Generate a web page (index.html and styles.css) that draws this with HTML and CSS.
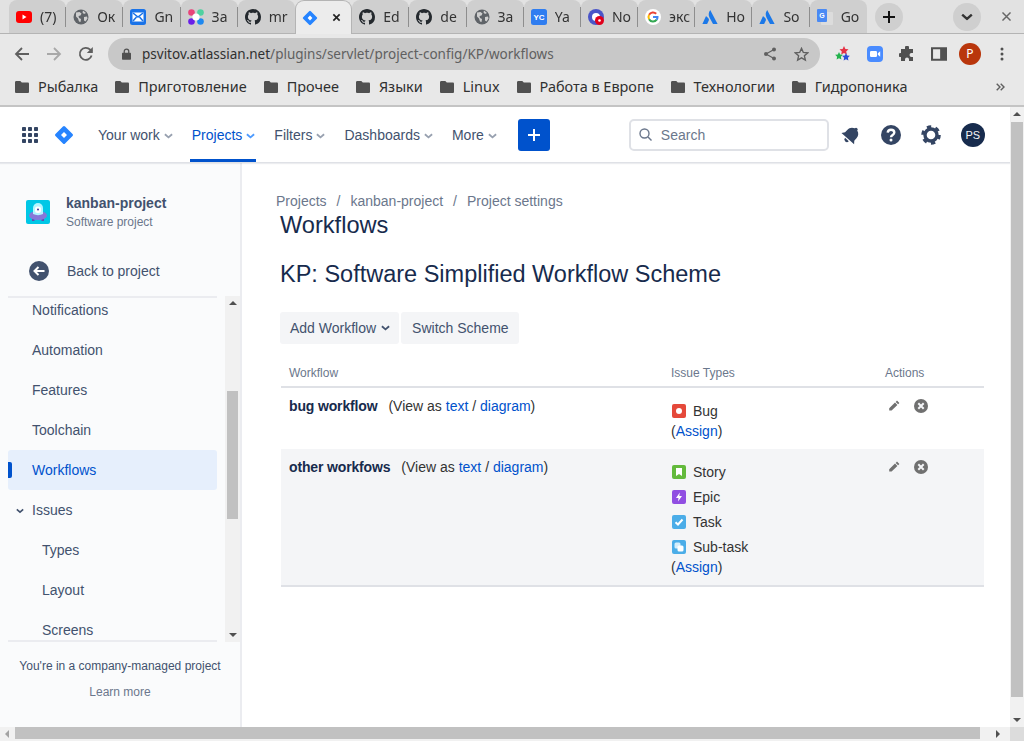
FILE: index.html
```html
<!DOCTYPE html>
<html lang="ru">
  <head>
    <meta charset="UTF-8" />
    <title>Workflows - Jira</title>
    <link rel="stylesheet" href="styles.css">
  </head>
  <body>
    <svg class="sprites" xmlns="http://www.w3.org/2000/svg">
      <symbol id="i-github" viewBox="0 0 16 16"><path fill="#24292e" d="M8 0C3.58 0 0 3.58 0 8c0 3.54 2.29 6.53 5.47 7.59.4.07.55-.17.55-.38 0-.19-.01-.82-.01-1.49-2.01.37-2.53-.49-2.69-.94-.09-.23-.48-.94-.82-1.13-.28-.15-.68-.52-.01-.53.63-.01 1.08.58 1.23.82.72 1.21 1.87.87 2.33.66.07-.52.28-.87.51-1.07-1.78-.2-3.64-.89-3.64-3.95 0-.87.31-1.59.82-2.15-.08-.2-.36-1.02.08-2.12 0 0 .67-.21 2.2.82.64-.18 1.32-.27 2-.27.68 0 1.36.09 2 .27 1.53-1.04 2.2-.82 2.2-.82.44 1.1.16 1.92.08 2.12.51.56.82 1.27.82 2.15 0 3.07-1.87 3.75-3.65 3.95.29.25.54.73.54 1.48 0 1.07-.01 1.93-.01 2.2 0 .21.15.46.55.38A8.013 8.013 0 0016 8c0-4.42-3.58-8-8-8z"/></symbol>
      <symbol id="i-globe" viewBox="0 0 16 16"><circle cx="8" cy="8" r="7.500" fill="#5f6368"/><path fill="#cfcfcf" d="M3 3.500l3.500-.5 2 1.500-1 2-2 .5.5 2 2 1-.5 3-1.500-.5-1-3-2-2zM10 1.500l3 2.500-2 1-1.500-1.500zM11 8l3-.500.500 2-2 3-1.500-1z"/></symbol>
      <symbol id="i-atlassian" viewBox="0 0 16 16"><path fill="#1b78e8" d="M8.200 1c-1.900 3-1.800 5.200-.7 7.400L11 15h4.600zM4.500 7.400c-.2-.3-.5-.3-.7.100L.4 15h4.700l1.700-3.400c.5-1 0-2.600-2.300-4.200z"/></symbol>
      <symbol id="i-folder" viewBox="0 0 14 12"><path fill="#505050" d="M1.300 0h4l1.500 1.500h6c.7 0 1.200.5 1.200 1.200v8c0 .7-.5 1.300-1.200 1.300H1.300C.6 12 0 11.400 0 10.700V1.300C0 .6.600 0 1.300 0z"/></symbol>
      <symbol id="i-chevron" viewBox="0 0 10 6"><path fill="none" stroke="currentColor" stroke-width="2" d="M1 1l4 3.500L9 1"/></symbol>
      <symbol id="i-jira" viewBox="0 0 20 20"><rect x="3.200" y="3.200" width="13.600" height="13.600" rx="1.500" transform="rotate(45 10 10)" fill="#2684ff"/><rect x="7.900" y="7.900" width="4.200" height="4.200" transform="rotate(45 10 10)" fill="#fff"/></symbol>
      <symbol id="i-pencil" viewBox="0 0 12 12"><path fill="#707070" d="M9 .6l2.400 2.300-1.300 1.300-2.400-2.300zM7 2.600l2.400 2.300-5.800 5.700H1.200V8.300z"/></symbol>
      <symbol id="i-remove" viewBox="0 0 14 14"><circle cx="7" cy="7" r="7" fill="#707070"/><path stroke="#f4f5f7" stroke-width="2" d="M4.300 4.300l5.400 5.400M9.700 4.300L4.300 9.700"/></symbol>
    </svg>

    <div class="tabstrip">
      <div class="tab"><svg class="fav" viewBox="0 0 16 16"><rect y="2" width="16" height="12" rx="3" fill="#f00"/><path fill="#fff" d="M6.500 5.500v5l4-2.500z"/></svg><span class="tab-title">(7)</span></div>
      <div class="tab"><svg class="fav"><use href="#i-globe"/></svg><span class="tab-title">Ок</span></div>
      <div class="tab"><svg class="fav" viewBox="0 0 16 16"><rect width="16" height="16" rx="2.500" fill="#1a73e8"/><rect x="2.500" y="3.500" width="11" height="9" fill="#fff"/><path fill="none" stroke="#1a73e8" stroke-width="1.500" d="M3 4l5 4 5-4M3 12l3.500-4M13 12L9.500 8"/></svg><span class="tab-title">Gn</span></div>
      <div class="tab"><svg class="fav" viewBox="0 0 16 16"><circle cx="3.500" cy="3.500" r="3.300" fill="#e8447a"/><circle cx="12.500" cy="3.500" r="3.300" fill="#4fd1a0"/><circle cx="3.500" cy="12.500" r="3.300" fill="#6a1fe8"/><circle cx="12.500" cy="12.500" r="3.300" fill="#1e88f0"/><circle cx="8" cy="8" r="3.600" fill="#fff"/></svg><span class="tab-title">За</span></div>
      <div class="tab tab-before-active"><svg class="fav"><use href="#i-github"/></svg><span class="tab-title">mr</span></div>
      <div class="tab tab-active"><svg class="fav"><use href="#i-jira"/></svg><svg class="tab-close" viewBox="0 0 10 10"><path stroke="#222" stroke-width="1.800" d="M1.500 1.500l7 7M8.500 1.500l-7 7"/></svg></div>
      <div class="tab"><svg class="fav"><use href="#i-github"/></svg><span class="tab-title">Ed</span></div>
      <div class="tab"><svg class="fav"><use href="#i-github"/></svg><span class="tab-title">de</span></div>
      <div class="tab"><svg class="fav"><use href="#i-globe"/></svg><span class="tab-title">За</span></div>
      <div class="tab"><svg class="fav" viewBox="0 0 16 16"><rect width="16" height="16" rx="2.500" fill="#2f7df0"/><text x="8" y="11" font-size="8" font-weight="700" font-family="Liberation Sans" text-anchor="middle" fill="#fff">YC</text></svg><span class="tab-title">Ya</span></div>
      <div class="tab"><svg class="fav" viewBox="0 0 16 16"><circle cx="8" cy="8" r="8" fill="#4a55c8"/><circle cx="8" cy="8" r="4" fill="#fff"/><circle cx="11.500" cy="11.500" r="4.500" fill="#e0001b"/><circle cx="11.500" cy="11.500" r="1.300" fill="#fff"/></svg><span class="tab-title">No</span></div>
      <div class="tab"><svg class="fav" viewBox="0 0 16 16"><circle cx="8" cy="8" r="8" fill="#fff"/><path fill="none" stroke="#ea4335" stroke-width="2" d="M11.200 4.800A4.500 4.500 0 0 0 4.100 5.800"/><path fill="none" stroke="#fbbc05" stroke-width="2" d="M4.100 5.800a4.500 4.500 0 0 0 0 4.400"/><path fill="none" stroke="#34a853" stroke-width="2" d="M4.100 10.200a4.500 4.500 0 0 0 7.600.5"/><path fill="none" stroke="#4285f4" stroke-width="2" d="M11.700 10.700A4.500 4.500 0 0 0 12.500 8H8"/></svg><span class="tab-title">экс</span></div>
      <div class="tab"><svg class="fav"><use href="#i-atlassian"/></svg><span class="tab-title">Ho</span></div>
      <div class="tab"><svg class="fav"><use href="#i-atlassian"/></svg><span class="tab-title">So</span></div>
      <div class="tab tab-last"><svg class="fav" viewBox="0 0 16 16"><rect x="4" y="3" width="12" height="13" rx="1" fill="#dcdcdc"/><rect width="10" height="13" rx="1" fill="#4a8af4"/><text x="5" y="9" font-size="7" font-weight="700" font-family="Liberation Sans" text-anchor="middle" fill="#fff">G</text></svg><span class="tab-title">Go</span></div>
      <div class="round-btn new-tab"><svg width="14" height="14" viewBox="0 0 14 14"><path stroke="#111" stroke-width="2" d="M7 1v12M1 7h12"/></svg></div>
      <div class="round-btn tab-search"><svg width="12" height="8" viewBox="0 0 10 6"><use href="#i-chevron" color="#333"/></svg></div>
      <svg class="win-close" viewBox="0 0 10 10"><path stroke="#666" stroke-width="1.600" d="M.5.500l9 9M9.500.500l-9 9"/></svg>
    </div>

    <div class="toolbar">
      <svg class="tool-icon" viewBox="0 0 16 16"><path fill="none" stroke="#5f5f5f" stroke-width="1.800" d="M15 8H2M8 2L2 8l6 6"/></svg>
      <svg class="tool-icon" viewBox="0 0 16 16"><path fill="none" stroke="#a8a8a8" stroke-width="1.800" d="M1 8h13M8 2l6 6-6 6"/></svg>
      <svg class="tool-icon" viewBox="0 0 16 16"><path fill="none" stroke="#5f5f5f" stroke-width="1.800" d="M13.600 9.500A6 6 0 1 1 12.200 3.700L14 5.500"/><path fill="#5f5f5f" d="M14.800 1v6h-6z"/></svg>
      <div class="omnibox">
        <svg class="lock" viewBox="0 0 10 13"><path fill="#505050" d="M1 5h8c.5 0 1 .5 1 1v6c0 .5-.5 1-1 1H1c-.5 0-1-.5-1-1V6c0-.5.5-1 1-1z"/><path fill="none" stroke="#505050" stroke-width="1.400" d="M2.500 5.500V3.500a2.500 2.500 0 0 1 5 0v2"/></svg>
        <span class="url"><span class="url-host">psvitov.atlassian.net</span>/plugins/servlet/project-config/KP/workflows</span>
        <svg class="omni-share" viewBox="0 0 14 14"><circle cx="11" cy="2.500" r="2" fill="#606060"/><circle cx="3" cy="7" r="2" fill="#606060"/><circle cx="11" cy="11.500" r="2" fill="#606060"/><path fill="none" stroke="#606060" stroke-width="1.200" d="M11 2.500L3 7l8 4.500"/></svg>
        <svg class="omni-star" viewBox="0 0 14 14"><path fill="none" stroke="#606060" stroke-width="1.300" d="M7 1.300l1.700 3.800 4.100.4-3.100 2.700.9 4-3.600-2.100-3.600 2.100.9-4-3.100-2.700 4.100-.4z"/></svg>
      </div>
      <div class="ext-group">
        <svg class="ext" viewBox="0 0 16 16"><path fill="#e53245" d="M9 0l1.400 2.900 3.100.4-2.300 2.200.6 3.100L9 7.100 6.200 8.600l.6-3.100-2.300-2.200 3.100-.4z"/><path fill="#22b24c" d="M4 6l1.200 2.400 2.700.4-2 1.900.5 2.700L4 12.200l-2.400 1.200.5-2.700-2-1.900 2.700-.4z"/><path fill="#2a4fd8" d="M11 7l1.200 2.400 2.700.4-2 1.900.5 2.700-2.400-1.200-2.400 1.200.5-2.700-2-1.900 2.700-.4z"/></svg>
        <svg class="ext" viewBox="0 0 16 16"><rect width="16" height="16" rx="4" fill="#4a8cff"/><rect x="3" y="5" width="7" height="6" rx="1.200" fill="#fff"/><path fill="#fff" d="M10.800 7.200L13.200 5.300v5.400l-2.400-1.900z"/></svg>
        <svg class="ext" viewBox="0 0 16 16"><path fill="#505050" d="M6 1.500a2 2 0 0 1 4 0V3h4v4h-1.500a2 2 0 0 0 0 4H14v4h-4v-1.500a2 2 0 0 0-4 0V15H2v-4h-.5a2 2 0 0 1 0-4H2V3h4z"/></svg>
        <svg class="ext" viewBox="0 0 14 12"><path fill="#505050" fill-rule="evenodd" d="M0 0h14v12H0zM1.800 1.800v8.400H8V1.800z"/></svg>
        <div class="profile">P</div>
        <svg class="ext kebab" viewBox="0 0 4 14"><circle cx="2" cy="2" r="1.500" fill="#505050"/><circle cx="2" cy="7" r="1.500" fill="#505050"/><circle cx="2" cy="12" r="1.500" fill="#505050"/></svg>
      </div>
    </div>

    <div class="bookmarks">
      <a class="mark"><svg><use href="#i-folder"/></svg>Рыбалка</a>
      <a class="mark"><svg><use href="#i-folder"/></svg>Приготовление</a>
      <a class="mark"><svg><use href="#i-folder"/></svg>Прочее</a>
      <a class="mark"><svg><use href="#i-folder"/></svg>Языки</a>
      <a class="mark"><svg><use href="#i-folder"/></svg>Linux</a>
      <a class="mark"><svg><use href="#i-folder"/></svg>Работа в Европе</a>
      <a class="mark"><svg><use href="#i-folder"/></svg>Технологии</a>
      <a class="mark"><svg><use href="#i-folder"/></svg>Гидропоника</a>
      <svg class="more-marks" viewBox="0 0 9 8"><path fill="none" stroke="#606060" stroke-width="1.400" d="M.7.700L4 4 .7 7.300M4.700.700L8 4 4.700 7.300"/></svg>
    </div>

    <div class="viewport">
      <div class="page">
        <header class="jira-nav">
          <svg class="apps" viewBox="0 0 16 16"><g fill="#344563"><rect width="4" height="4" rx=".8"/><rect x="6" width="4" height="4" rx=".8"/><rect x="12" width="4" height="4" rx=".8"/><rect y="6" width="4" height="4" rx=".8"/><rect x="6" y="6" width="4" height="4" rx=".8"/><rect x="12" y="6" width="4" height="4" rx=".8"/><rect y="12" width="4" height="4" rx=".8"/><rect x="6" y="12" width="4" height="4" rx=".8"/><rect x="12" y="12" width="4" height="4" rx=".8"/></g></svg>
          <svg class="jira-logo"><use href="#i-jira"/></svg>
          <nav class="nav-items">
            <a class="nav-item">Your work<svg class="caret"><use href="#i-chevron"/></svg></a>
            <a class="nav-item is-current">Projects<svg class="caret"><use href="#i-chevron"/></svg></a>
            <a class="nav-item">Filters<svg class="caret"><use href="#i-chevron"/></svg></a>
            <a class="nav-item">Dashboards<svg class="caret"><use href="#i-chevron"/></svg></a>
            <a class="nav-item">More<svg class="caret"><use href="#i-chevron"/></svg></a>
          </nav>
          <button class="create-btn"><svg width="12" height="12" viewBox="0 0 12 12"><path stroke="#fff" stroke-width="2" d="M6 0v12M0 6h12"/></svg></button>
          <div class="search-box">
            <svg width="13" height="13" viewBox="0 0 13 13"><circle cx="5.500" cy="5.500" r="4.500" fill="none" stroke="#6b778c" stroke-width="1.400"/><path stroke="#6b778c" stroke-width="1.400" d="M9 9l3.500 3.500"/></svg>
            <span>Search</span>
          </div>
          <div class="nav-icons">
            <svg class="nav-icon" viewBox="0 0 20 20"><g fill="#344563" transform="rotate(42 10 10)"><path d="M10 .8a1.600 1.600 0 0 1 1.600 1.700c3 .8 4.600 3.200 4.600 6.200v3.300l2.300 2.800h-17l2.300-2.800V8.700c0-3 1.600-5.400 4.600-6.200A1.600 1.600 0 0 1 10 .8z"/><path d="M7.500 16.100h5a2.500 2.500 0 0 1-5 0z"/></g></svg>
            <svg class="nav-icon" viewBox="0 0 20 20"><circle cx="10" cy="10" r="10" fill="#344563"/><path fill="none" stroke="#fff" stroke-width="2.400" d="M6.700 7.600c.2-1.800 1.500-2.800 3.300-2.800 1.900 0 3.300 1.100 3.300 2.800 0 2.500-3.300 2.200-3.300 4.700"/><circle cx="10" cy="15" r="1.500" fill="#fff"/></svg>
            <svg class="nav-icon" viewBox="0 0 20 20"><circle cx="10" cy="10" r="6" fill="none" stroke="#344563" stroke-width="3.400"/><circle cx="10" cy="10" r="8.300" fill="none" stroke="#344563" stroke-width="3" stroke-dasharray="4.300 4.390"/></svg>
            <div class="avatar">PS</div>
          </div>
        </header>

        <div class="workspace">
          <aside class="sidebar">
            <div class="project-head">
              <svg class="project-logo" viewBox="0 0 24 24"><rect width="24" height="24" rx="2" fill="#00c7e6"/><path fill="#5e4db2" d="M6 18h2.500v3H6zM15.500 18h2.500v3h-2.500z"/><ellipse cx="12" cy="15.500" rx="9" ry="4.500" fill="#8777d9"/><path fill="#b3f5ff" d="M7 14V8a5 5 0 0 1 10 0v6c-3 1.500-7 1.500-10 0z"/><rect x="9" y="6.500" width="6" height="6.500" rx="2.500" fill="#fff"/><circle cx="12" cy="9.500" r="1" fill="#403294"/></svg>
              <div>
                <div class="project-name">kanban-project</div>
                <div class="project-kind">Software project</div>
              </div>
            </div>
            <a class="back-link"><svg width="20" height="20" viewBox="0 0 20 20"><circle cx="10" cy="10" r="10" fill="#42526e"/><path fill="none" stroke="#fff" stroke-width="2" d="M15.500 10H5.500M9.500 6l-4 4 4 4"/></svg>Back to project</a>
            <div class="side-scroll">
              <div class="side-list">
                <div class="side-viewport">
                  <a class="side-item">Notifications</a>
                  <a class="side-item">Automation</a>
                  <a class="side-item">Features</a>
                  <a class="side-item">Toolchain</a>
                  <a class="side-item is-selected">Workflows</a>
                  <a class="side-item"><svg class="side-caret"><use href="#i-chevron"/></svg>Issues</a>
                  <a class="side-item side-sub">Types</a>
                  <a class="side-item side-sub">Layout</a>
                  <a class="side-item side-sub">Screens</a>
                </div>
              </div>
              <div class="side-bar">
                <span class="arrow-up"></span>
                <div class="side-track"><div class="side-thumb"></div></div>
                <span class="arrow-down"></span>
              </div>
            </div>
            <div class="side-foot">
              <p>You're in a company-managed project</p>
              <a>Learn more</a>
            </div>
          </aside>

          <main class="content">
            <div class="crumbs"><a>Projects</a><span>/</span><a>kanban-project</a><span>/</span><a>Project settings</a></div>
            <h1>Workflows</h1>
            <h2>KP: Software Simplified Workflow Scheme</h2>
            <div class="actions-bar">
              <button class="aui-btn btn-add">Add Workflow<svg class="caret-dark"><use href="#i-chevron"/></svg></button>
              <button class="aui-btn btn-switch">Switch Scheme</button>
            </div>
            <div class="scheme">
              <div class="scheme-row scheme-head"><div>Workflow</div><div>Issue Types</div><div>Actions</div></div>
              <div class="scheme-row row-bug">
                <div><b>bug workflow</b><span class="view-as">(View as <a>text</a> / <a>diagram</a>)</span></div>
                <div>
                  <div class="issue-type"><svg viewBox="0 0 14 14"><rect width="14" height="14" rx="2" fill="#e5493a"/><circle cx="7" cy="7" r="3" fill="#fff"/></svg>Bug</div>
                  <div class="assign">(<a>Assign</a>)</div>
                </div>
                <div class="row-actions"><svg class="pencil"><use href="#i-pencil"/></svg><svg class="remove"><use href="#i-remove"/></svg></div>
              </div>
              <div class="scheme-row row-other">
                <div><b>other workfows</b><span class="view-as">(View as <a>text</a> / <a>diagram</a>)</span></div>
                <div>
                  <div class="issue-type"><svg viewBox="0 0 14 14"><rect width="14" height="14" rx="2" fill="#63ba3c"/><path fill="#fff" d="M4 3h6v8L7 9l-3 2z"/></svg>Story</div>
                  <div class="issue-type"><svg viewBox="0 0 14 14"><rect width="14" height="14" rx="2" fill="#904ee2"/><path fill="#fff" d="M7.800 2.500L4 8h2.500l-.5 3.500L10 6H7.300z"/></svg>Epic</div>
                  <div class="issue-type"><svg viewBox="0 0 14 14"><rect width="14" height="14" rx="2" fill="#4bade8"/><path fill="none" stroke="#fff" stroke-width="2" d="M3.500 7.200l2.500 2.300 4.500-5"/></svg>Task</div>
                  <div class="issue-type"><svg viewBox="0 0 14 14"><rect width="14" height="14" rx="2" fill="#4bade8"/><rect x="2.500" y="2.500" width="6" height="6" rx="1.500" fill="#d5eefb"/><rect x="5.500" y="5.500" width="6" height="6" rx="1.500" fill="#fff"/></svg>Sub-task</div>
                  <div class="assign">(<a>Assign</a>)</div>
                </div>
                <div class="row-actions"><svg class="pencil"><use href="#i-pencil"/></svg><svg class="remove"><use href="#i-remove"/></svg></div>
              </div>
            </div>
          </main>
        </div>

        <div class="hbar">
          <span class="arrow-left"></span>
          <div class="hthumb"></div>
          <span class="arrow-right"></span>
        </div>
      </div>
      <div class="vbar">
        <span class="arrow-up"></span>
        <div class="vtrack"><div class="vthumb"></div></div>
        <span class="arrow-down"></span>
        <div class="vcorner"></div>
      </div>
    </div>
  </body>
</html>
```

FILE: styles.css
```css
html,
body {
  margin: 0;
  padding: 0;
  height: 741px;
  overflow: hidden;
}
body {
  display: flex;
  flex-direction: column;
  font-family: "Liberation Sans", Arial, sans-serif;
  font-size: 14px;
  color: #172b4d;
  background: #fff;
}
.sprites {
  display: none;
}
a {
  text-decoration: none;
}

/* browser tabs */
.tabstrip {
  flex: 0 0 34px;
  min-height: 0;
  display: flex;
  align-items: flex-start;
  padding-left: 9px;
  background: #e2e2e2;
  box-sizing: border-box;
  border-bottom: 1px solid #b4b4b4;
  font-family: "Noto Sans", sans-serif;
}
.tab {
  position: relative;
  flex: 0 0 57.2px;
  height: 33px;
  display: flex;
  align-items: center;
  box-sizing: border-box;
  padding-left: 7px;
  background: #cfcfcf;
  border-radius: 8px 8px 0 0;
}
.tab::after {
  content: "";
  position: absolute;
  right: 0;
  top: 7px;
  height: 20px;
  width: 1px;
  background: #8e8e8e;
}
.tab-before-active::after,
.tab-active::after,
.tab-last::after {
  display: none;
}
.tab-active {
  background: #ececec;
  height: 34px;
  border-radius: 9px 9px 0 0;
  border: 1px solid #b4b4b4;
  border-bottom: 0;
  padding-left: 6px;
}
.fav {
  flex: 0 0 16px;
  width: 16px;
  height: 16px;
}
.tab-title {
  margin-left: 8px;
  width: 26px;
  overflow: hidden;
  white-space: nowrap;
  font-size: 14px;
  color: #333;
  -webkit-mask-image: linear-gradient(to right, #000 70%, transparent);
  mask-image: linear-gradient(to right, #000 70%, transparent);
}
.tab-close {
  width: 9px;
  height: 9px;
  margin-left: 14px;
}
.round-btn {
  width: 28px;
  height: 28px;
  margin-top: 3px;
  border-radius: 50%;
  background: #cfcfcf;
  display: flex;
  align-items: center;
  justify-content: center;
}
.new-tab {
  margin-left: 8px;
}
.tab-search {
  margin-left: 50px;
}
.win-close {
  width: 9px;
  height: 9px;
  margin: 12px 0 0 21px;
}

/* toolbar */
.toolbar {
  flex: 0 0 36px;
  box-sizing: border-box;
  display: flex;
  align-items: center;
  padding: 4px 0 0 14px;
  background: #e8e8e8;
}
.tool-icon {
  width: 16px;
  height: 16px;
  margin-right: 16px;
}
.omnibox {
  margin-left: -2px;
  width: 712px;
  height: 32px;
  border-radius: 16px;
  background: #c8c8c8;
  display: flex;
  align-items: center;
  padding-left: 14px;
  box-sizing: border-box;
  font-family: "Noto Sans", sans-serif;
  font-size: 13.500px;
  color: #606060;
}
.lock {
  width: 9px;
  height: 12px;
  margin-right: 11px;
}
.url {
  flex: 1;
  white-space: nowrap;
}
.url-host {
  color: #303030;
}
.omni-share {
  width: 14px;
  height: 14px;
  margin-right: 17px;
}
.omni-star {
  width: 15px;
  height: 15px;
  margin-right: 11px;
}
.ext-group {
  display: flex;
  align-items: center;
  margin-left: 15px;
}
.ext {
  width: 16px;
  height: 16px;
  margin-right: 16px;
}
.profile {
  width: 22px;
  height: 22px;
  margin-left: -4px;
  border-radius: 50%;
  background: #b9360c;
  color: #fff;
  font-family: "Noto Sans", sans-serif;
  font-size: 12px;
  line-height: 22px;
  text-align: center;
}
.ext.kebab {
  width: 4px;
  margin: 0 0 0 19px;
}

/* bookmarks */
.bookmarks {
  flex: 0 0 37px;
  box-sizing: border-box;
  display: flex;
  align-items: center;
  padding: 0 0 2px 15px;
  background: #e8e8e8;
  border-bottom: 2px solid #c4c4c4;
  font-family: "Noto Sans", sans-serif;
  font-size: 14.450px;
  color: #303030;
}
.mark {
  display: flex;
  align-items: center;
  margin-right: 17px;
  white-space: nowrap;
}
.mark svg {
  width: 14px;
  height: 12px;
  margin-right: 9px;
}
.more-marks {
  width: 9px;
  height: 8px;
  margin-left: auto;
  margin-right: 19px;
}

/* page area */
.viewport {
  flex: 1;
  display: flex;
  min-height: 0;
}
.page {
  flex: 1;
  display: flex;
  flex-direction: column;
  min-width: 0;
}
.jira-nav {
  flex: 0 0 56px;
  box-sizing: border-box;
  display: flex;
  align-items: center;
  padding-left: 22px;
  border-bottom: 1px solid #dfe1e6;
  box-shadow: 0 1px 1px rgba(9, 30, 66, 0.08);
  position: relative;
}
.apps {
  width: 16px;
  height: 16px;
}
.jira-logo {
  width: 20px;
  height: 20px;
  margin-left: 16px;
}
.nav-items {
  display: flex;
  align-self: stretch;
  margin-left: 20px;
}
.nav-item {
  display: flex;
  align-items: center;
  padding: 0 4px;
  margin-right: 11px;
  color: #42526e;
  white-space: nowrap;
}
.nav-item.is-current {
  color: #0052cc;
  box-shadow: inset 0 -3px 0 #0052cc;
  padding: 0 1px 0 2px;
  margin-left: 2px;
  margin-right: 14px;
}
.caret {
  width: 9px;
  height: 6px;
  margin-left: 4px;
  margin-top: 2px;
  color: #97a0af;
}
.is-current .caret {
  color: #4c9aff;
}
.create-btn {
  width: 32px;
  height: 32px;
  margin-left: 6px;
  padding: 0;
  border: 0;
  border-radius: 3px;
  background: #0052cc;
  display: flex;
  align-items: center;
  justify-content: center;
}
.search-box {
  width: 200px;
  height: 32px;
  box-sizing: border-box;
  margin-left: 79px;
  border: 2px solid #dfe1e6;
  border-radius: 5px;
  display: flex;
  align-items: center;
  padding-left: 8px;
  color: #6b778c;
}
.search-box span {
  margin-left: 9px;
}
.nav-icons {
  display: flex;
  align-items: center;
  margin-left: 12px;
}
.nav-icon {
  width: 20px;
  height: 20px;
  margin-right: 20px;
}
.avatar {
  width: 24px;
  height: 24px;
  border-radius: 50%;
  background: #172b4d;
  color: #f4f5f7;
  font-size: 11px;
  line-height: 24px;
  text-align: center;
}
.workspace {
  flex: 1;
  display: flex;
  min-height: 0;
}

/* sidebar */
.sidebar {
  flex: 0 0 242px;
  box-sizing: border-box;
  background: #fafbfc;
  border-right: 2px solid #ebecf0;
  display: flex;
  flex-direction: column;
}
.project-head {
  display: flex;
  align-items: center;
  height: 36px;
  margin-top: 31px;
  padding-left: 26px;
}
.project-logo {
  width: 24px;
  height: 24px;
  margin-right: 16px;
}
.project-name {
  font-weight: 700;
  color: #42526e;
  line-height: 18px;
}
.project-kind {
  font-size: 12px;
  color: #6b778c;
  line-height: 18px;
  margin-top: 1px;
}
.back-link {
  display: flex;
  align-items: center;
  height: 40px;
  margin-top: 21px;
  padding-left: 29px;
  color: #42526e;
}
.back-link svg {
  margin-right: 18px;
}
.side-scroll {
  display: flex;
  height: 346px;
  margin-top: 5px;
}
.side-list {
  width: 209px;
  margin-left: 8px;
  border-top: 2px solid #ebecf0;
  border-bottom: 2px solid #ebecf0;
  overflow: hidden;
}
.side-viewport {
  margin-top: -8px;
}
.side-item {
  display: flex;
  align-items: center;
  height: 40px;
  padding-left: 24px;
  box-sizing: border-box;
  color: #42526e;
  border-radius: 3px;
  position: relative;
}
.side-sub {
  padding-left: 34px;
}
.side-item.is-selected {
  background: #e6effc;
  color: #0052cc;
}
.is-selected::before {
  content: "";
  position: absolute;
  left: 0;
  top: 12px;
  width: 4px;
  height: 16px;
  background: #0052cc;
  border-radius: 0 2px 2px 0;
}
.side-caret {
  position: absolute;
  left: 8px;
  top: 18px;
  width: 8px;
  height: 6px;
  color: #42526e;
}
.side-bar {
  width: 15px;
  margin-left: 8px;
  background: #f1f1f1;
  display: flex;
  flex-direction: column;
  align-items: center;
}
.side-track {
  flex: 1;
  width: 100%;
}
.side-thumb {
  width: 11px;
  height: 128px;
  margin: 81px 0 0 2px;
  background: #c1c1c1;
}
.arrow-up,
.arrow-down {
  flex: 0 0 auto;
  width: 0;
  height: 0;
  margin: 5px 0;
  border-left: 4px solid transparent;
  border-right: 4px solid transparent;
}
.arrow-up {
  border-bottom: 4px solid #505050;
}
.arrow-down {
  border-top: 4px solid #505050;
}
.side-foot {
  text-align: center;
  font-size: 12px;
  padding-top: 16px;
}
.side-foot p {
  margin: 0 0 11px;
  line-height: 16px;
  color: #42526e;
  white-space: nowrap;
}
.side-foot a {
  color: #6b778c;
}

/* main column */
.content {
  flex: 1;
  min-width: 0;
  padding: 29px 26px 0 34px;
  box-sizing: border-box;
}
.crumbs {
  display: flex;
  line-height: 18px;
  color: #6b778c;
}
.crumbs span {
  margin: 0 10px;
}
h1 {
  margin: 1px 0 0 4px;
  font-size: 23.600px;
  font-weight: 400;
  line-height: 28px;
}
h2 {
  margin: 21px 0 0 4px;
  font-size: 23.500px;
  font-weight: 400;
  line-height: 28px;
}
.actions-bar {
  display: flex;
  gap: 2px;
  margin: 24px 0 0 4px;
}
.aui-btn {
  height: 32px;
  padding: 0 10px;
  border: 0;
  border-radius: 3px;
  background: #f4f5f7;
  color: #42526e;
  font: inherit;
  display: flex;
  align-items: center;
}
.btn-add {
  padding-right: 9px;
}
.btn-switch {
  padding-left: 11px;
}
.caret-dark {
  width: 9px;
  height: 6px;
  margin-left: 5px;
  color: #42526e;
}
.scheme {
  margin: 15px 0 0 5px;
  width: 703px;
  line-height: 20px;
}
.scheme-row {
  display: grid;
  grid-template-columns: 382px 214px 1fr;
  padding-left: 8px;
  box-sizing: border-box;
}
.scheme-head {
  height: 29px;
  padding-top: 5px;
  border-bottom: 2px solid #dfe1e6;
  font-size: 12px;
  line-height: 18px;
  color: #6b778c;
}
.row-bug {
  height: 61px;
  padding-top: 8px;
}
.row-other {
  height: 138px;
  padding-top: 8px;
  background: #f4f5f7;
  border-bottom: 2px solid #dfe1e6;
}
.scheme-row b {
  letter-spacing: -0.15px;
}
.view-as {
  margin-left: 11px;
  color: #333;
}
.scheme a {
  color: #0052cc;
}
.issue-type {
  display: flex;
  align-items: center;
  height: 25px;
  padding-left: 1px;
  color: #333;
}
.row-bug .issue-type {
  height: 20px;
  margin-top: 5px;
}
.row-other .issue-type:first-child {
  margin-top: 2px;
}
.issue-type svg {
  width: 14px;
  height: 14px;
  margin-right: 7px;
}
.assign {
  color: #333;
}
.row-other .assign {
  margin-top: -2px;
}
.row-actions {
  display: flex;
  align-items: flex-start;
  padding: 3px 0 0 3px;
}
.pencil {
  width: 12px;
  height: 12px;
  margin-top: 1px;
}
.remove {
  width: 14px;
  height: 14px;
  margin-left: 14px;
}

/* page scrollbars */
.hbar {
  flex: 0 0 14px;
  display: flex;
  align-items: flex-start;
  background: #f1f1f1;
}
.arrow-left,
.arrow-right {
  width: 0;
  height: 0;
  margin-top: 3px;
  border-top: 4px solid transparent;
  border-bottom: 4px solid transparent;
}
.arrow-left {
  margin-left: 5px;
  border-right: 4px solid #a3a3a3;
}
.arrow-right {
  margin-left: 16px;
  border-left: 4px solid #505050;
}
.hthumb {
  width: 965px;
  height: 12px;
  margin-left: 6px;
  background: #c1c1c1;
}
.vbar {
  flex: 0 0 14px;
  background: #f1f1f1;
  display: flex;
  flex-direction: column;
  align-items: center;
}
.vtrack {
  flex: 1;
  width: 100%;
}
.vthumb {
  width: 12px;
  height: 575px;
  margin: 1px 0 0 1px;
  background: #c1c1c1;
}
.vcorner {
  flex: 0 0 14px;
  width: 100%;
  background: #dcdcdc;
}
```
